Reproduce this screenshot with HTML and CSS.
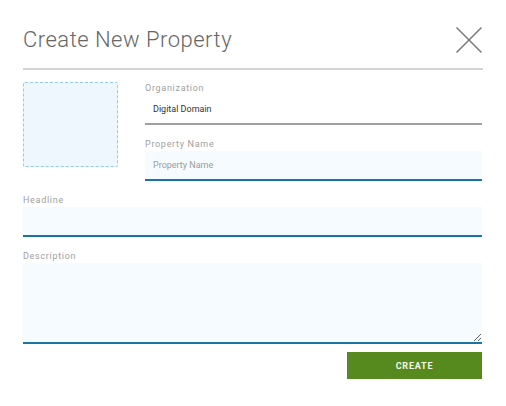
FILE: index.html
```html
<!DOCTYPE html>
<html>
<head>
<meta charset="utf-8">
<link rel="stylesheet" href="styles.css">
</head>
<body>
<div class="dialog">
  <div class="header">
    <h1 class="title">Create New Property</h1>
    <svg class="close" width="26" height="26" viewBox="0 0 26 26"><path d="M0.5 0.5 L25.5 25.5 M25.5 0.5 L0.5 25.5" stroke="#7a7a7a" stroke-width="1.5" fill="none"/></svg>
  </div>
  <div class="body">
    <div class="top-row">
      <div class="image-drop"></div>
      <div class="col">
        <div class="field">
          <label class="label">Organization</label>
          <div class="static">Digital Domain</div>
        </div>
        <div class="field">
          <label class="label">Property Name</label>
          <input class="input" type="text" placeholder="Property Name">
        </div>
      </div>
    </div>
    <div class="field">
      <label class="label">Headline</label>
      <input class="input" type="text">
    </div>
    <div class="field last">
      <label class="label">Description</label>
      <textarea class="textarea"></textarea>
    </div>
    <div class="actions">
      <button class="btn">CREATE</button>
    </div>
  </div>
</div>
</body>
</html>
```
FILE: styles.css
```css
* { box-sizing: border-box; }
html, body { margin: 0; padding: 0; background: #fff; }
body { font-family: Roboto, "Liberation Sans", sans-serif; }
.dialog { width: 506px; padding: 0 23px; }
.header {
  display: flex; align-items: center; justify-content: space-between;
  padding: 27px 1px 15px 0;
  border-bottom: 2px solid #d4d4d4;
}
.title {
  margin: 0; font-weight: 300; font-size: 22px; line-height: 26px;
  letter-spacing: 0.5px; color: #666;
}
.close { display: block; }
.body { padding-top: 12px; padding-right: 1px; }
.top-row { display: flex; align-items: flex-start; gap: 27px; margin-bottom: 13px; }
.image-drop {
  width: 95px; height: 85px; flex: none;
  background: #eef7fd; border: 1px dashed #92cbe4; border-radius: 2px;
}
.col { flex: 1; }
.field { display: flex; flex-direction: column; margin-bottom: 13px; }
.top-row .field:last-child { margin-bottom: 0; }
.label {
  font-size: 9px; line-height: 12px; letter-spacing: 0.7px; color: #a0a0a0;
  margin-bottom: 1px;
}
.static {
  height: 30px; line-height: 28px; padding-left: 8px;
  font-size: 9px; color: #333; border-bottom: 2px solid #a0a0a0;
}
.input, .textarea {
  display: block; width: 100%; height: 30px; border: 0;
  border-bottom: 2px solid #1b74a6; background: #f5fbfe;
  padding: 0 8px; font-family: inherit; font-size: 9px; color: #333; outline: none;
  margin: 0;
}
.input::placeholder { color: #9b9b9b; }
.textarea { height: 81px; resize: vertical; }
.field.last { margin-bottom: 8px; }
.actions { display: flex; justify-content: flex-end; }
.btn {
  width: 135px; height: 27px; border: 0; background: #568a1e; color: #f2f7ec;
  font-family: inherit; font-weight: 700; font-size: 9px; letter-spacing: 0.8px;
  padding: 0; margin-right: 0;
}
```
